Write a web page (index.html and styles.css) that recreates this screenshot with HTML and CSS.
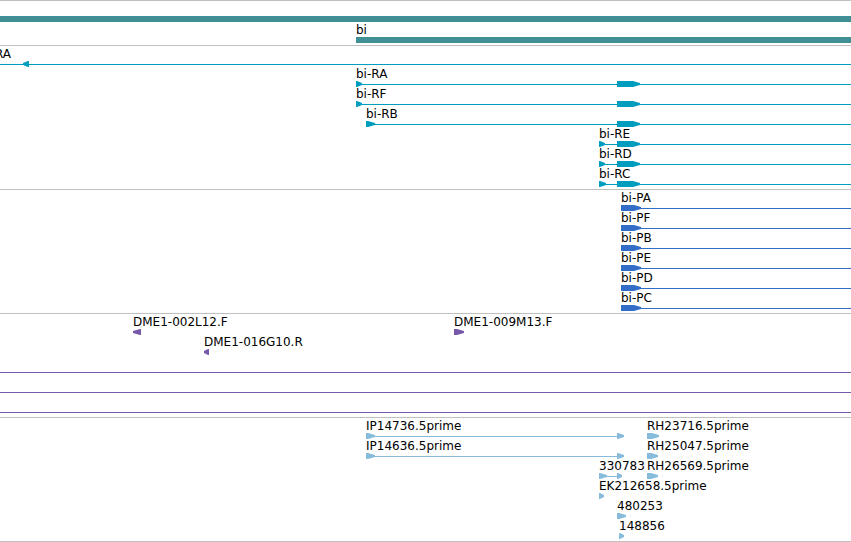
FILE: index.html
```
<!DOCTYPE html>
<html lang="en">
<head>
    <meta charset="UTF-8">
    <meta name="viewport" content="width=device-width, initial-scale=1.0">
    <title>Genome Browser - bi</title>
    <link rel="stylesheet" href="styles.css">
</head>
<body>
    <main class="browser">
        <!-- genes -->
        <section class="track genes">
            <div class="row">
                <div class="feature open" style="left: 0"><i class="bar"></i></div>
            </div>
            <div class="row">
                <div class="feature open" style="left: 356px"><span class="label">bi</span><i class="bar"></i></div>
            </div>
        </section>

        <!-- transcripts -->
        <section class="track transcripts">
            <div class="row">
                <div class="feature open line" style="left: -5px"><span class="label">RA</span><i class="exon reverse" style="left: 28px; width: 6px"></i></div>
            </div>
            <div class="row">
                <div class="feature open line" style="left: 356px"><span class="label">bi-RA</span><i class="exon" style="left: 0; width: 6px"></i><i class="exon" style="left: 261px; width: 23px"></i></div>
            </div>
            <div class="row">
                <div class="feature open line" style="left: 356px"><span class="label">bi-RF</span><i class="exon" style="left: 0; width: 6px"></i><i class="exon" style="left: 261px; width: 23px"></i></div>
            </div>
            <div class="row">
                <div class="feature open line" style="left: 366px"><span class="label">bi-RB</span><i class="exon" style="left: 0; width: 9px"></i><i class="exon" style="left: 251px; width: 23px"></i></div>
            </div>
            <div class="row">
                <div class="feature open line" style="left: 599px"><span class="label">bi-RE</span><i class="exon" style="left: 0; width: 6px"></i><i class="exon" style="left: 18px; width: 23px"></i></div>
            </div>
            <div class="row">
                <div class="feature open line" style="left: 599px"><span class="label">bi-RD</span><i class="exon" style="left: 0; width: 6px"></i><i class="exon" style="left: 18px; width: 23px"></i></div>
            </div>
            <div class="row">
                <div class="feature open line" style="left: 599px"><span class="label">bi-RC</span><i class="exon" style="left: 0; width: 7px"></i><i class="exon" style="left: 18px; width: 23px"></i></div>
            </div>
        </section>

        <!-- coding sequences -->
        <section class="track proteins">
            <div class="row">
                <div class="feature open line" style="left: 621px"><span class="label">bi-PA</span><i class="exon" style="left: 0; width: 20px"></i></div>
            </div>
            <div class="row">
                <div class="feature open line" style="left: 621px"><span class="label">bi-PF</span><i class="exon" style="left: 0; width: 20px"></i></div>
            </div>
            <div class="row">
                <div class="feature open line" style="left: 621px"><span class="label">bi-PB</span><i class="exon" style="left: 0; width: 20px"></i></div>
            </div>
            <div class="row">
                <div class="feature open line" style="left: 621px"><span class="label">bi-PE</span><i class="exon" style="left: 0; width: 20px"></i></div>
            </div>
            <div class="row">
                <div class="feature open line" style="left: 621px"><span class="label">bi-PD</span><i class="exon" style="left: 0; width: 20px"></i></div>
            </div>
            <div class="row">
                <div class="feature open line" style="left: 621px"><span class="label">bi-PC</span><i class="exon" style="left: 0; width: 20px"></i></div>
            </div>
        </section>

        <!-- clone ends -->
        <section class="track clones">
            <div class="row">
                <div class="feature" style="left: 133px; width: 8px"><span class="label">DME1-002L12.F</span><i class="exon reverse" style="left: 0; width: 8px"></i></div>
                <div class="feature" style="left: 454px; width: 10px"><span class="label">DME1-009M13.F</span><i class="exon" style="left: 0; width: 10px"></i></div>
            </div>
            <div class="row">
                <div class="feature" style="left: 204px; width: 5px"><span class="label">DME1-016G10.R</span><i class="exon reverse" style="left: 0; width: 5px"></i></div>
            </div>
            <div class="row"><div class="feature open line" style="left: 0"></div></div>
            <div class="row"><div class="feature open line" style="left: 0"></div></div>
            <div class="row"><div class="feature open line" style="left: 0"></div></div>
        </section>

        <!-- cDNA and EST reads -->
        <section class="track reads">
            <div class="row">
                <div class="feature line" style="left: 366px; width: 258px"><span class="label">IP14736.5prime</span><i class="exon" style="left: 0; width: 9px"></i><i class="exon" style="left: 251px; width: 7px"></i></div>
                <div class="feature" style="left: 647px; width: 12px"><span class="label">RH23716.5prime</span><i class="exon" style="left: 0; width: 12px"></i></div>
            </div>
            <div class="row">
                <div class="feature line" style="left: 366px; width: 258px"><span class="label">IP14636.5prime</span><i class="exon" style="left: 0; width: 9px"></i><i class="exon" style="left: 251px; width: 7px"></i></div>
                <div class="feature" style="left: 647px; width: 11px"><span class="label">RH25047.5prime</span><i class="exon" style="left: 0; width: 11px"></i></div>
            </div>
            <div class="row">
                <div class="feature line" style="left: 599px; width: 23px"><span class="label">330783</span><i class="exon" style="left: 0; width: 8px"></i><i class="exon" style="left: 18px; width: 5px"></i></div>
                <div class="feature" style="left: 647px; width: 11px"><span class="label">RH26569.5prime</span><i class="exon" style="left: 0; width: 11px"></i></div>
            </div>
            <div class="row">
                <div class="feature" style="left: 599px; width: 5px"><span class="label">EK212658.5prime</span><i class="exon" style="left: 0; width: 5px"></i></div>
            </div>
            <div class="row">
                <div class="feature" style="left: 617px; width: 9px"><span class="label">480253</span><i class="exon" style="left: 0; width: 9px"></i></div>
            </div>
            <div class="row">
                <div class="feature" style="left: 619px; width: 5px"><span class="label">148856</span><i class="exon" style="left: 0; width: 5px"></i></div>
            </div>
        </section>
    </main>
</body>
</html>
```
FILE: styles.css
```
body {
    margin: 0;
    background: #fff;
    color: #000;
    font-family: "DejaVu Sans", sans-serif;
    font-size: 12px;
    line-height: 14px;
}
.browser {
    border-top: 1px solid #c0c0c0;
    overflow: hidden;
}
.track {
    padding: 1px 0 2px;
    border-bottom: 1px solid #c0c0c0;
}
.row {
    position: relative;
    height: 20px;
}

/* features sit at their position on the sequence */
.feature {
    position: absolute;
    top: 0;
    height: 20px;
}
.feature.open {
    right: 0;
}
.feature.line::before {
    content: "";
    position: absolute;
    top: 17px;
    left: 0;
    right: 0;
    height: 1px;
    background: var(--color);
}
.label {
    white-space: nowrap;
}
.bar,
.exon {
    position: absolute;
    top: 14px;
    height: 6px;
    background: var(--color);
}
.bar {
    left: 0;
    right: 0;
}
/* arrow head takes the last 7px, less on very short exons */
.exon {
    clip-path: polygon(0 0, max(1px, 100% - 7px) 0, 100% 33%, 100% 67%, max(1px, 100% - 7px) 100%, 0 100%);
}
.exon.reverse {
    clip-path: polygon(100% 0, min(7px, 100% - 1px) 0, 0 33%, 0 67%, min(7px, 100% - 1px) 100%, 100% 100%);
}

/* tracks */
.genes {
    --color: #3f8f94;
    padding-bottom: 1px;
}
.genes .row {
    height: 21px;
}
.transcripts {
    --color: #009dbf;
}
.proteins {
    --color: #326dc8;
}
.clones {
    --color: #7858a8;
}
.reads {
    --color: #86bbdc;
}
```
